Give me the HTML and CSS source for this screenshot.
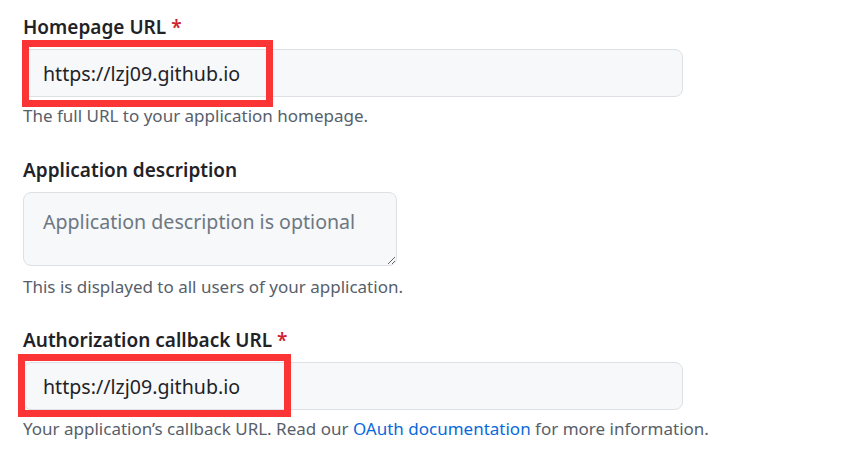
FILE: index.html
```html
<!DOCTYPE html>
<html lang="en">
<head>
<meta charset="utf-8">
<link rel="stylesheet" href="styles.css">
</head>
<body>
<form class="form">
  <div class="group group-first">
    <label class="label">Homepage URL <span class="req">*</span></label>
    <div class="field">
      <input class="input" type="text" value="https://lzj09.github.io">
      <span class="mark mark-1"></span>
    </div>
    <p class="note">The full URL to your application homepage.</p>
  </div>
  <div class="group">
    <label class="label">Application description</label>
    <textarea class="textarea" placeholder="Application description is optional"></textarea>
    <p class="note note-ta">This is displayed to all users of your application.</p>
  </div>
  <div class="group">
    <label class="label">Authorization callback URL <span class="req">*</span></label>
    <div class="field">
      <input class="input" type="text" value="https://lzj09.github.io">
      <span class="mark mark-2"></span>
    </div>
    <p class="note">Your application’s callback URL. Read our <a class="link" href="#">OAuth documentation</a> for more information.</p>
  </div>
</form>
</body>
</html>
```
FILE: styles.css
```css
html, body {
  margin: 0;
  padding: 0;
  background: #ffffff;
}
body {
  font-family: "Noto Sans", "Liberation Sans", sans-serif;
  color: #1f2328;
}
.form {
  padding: 15px 0 0 23px;
}
.group {
  margin-bottom: 30px;
}
.group-first {
  margin-bottom: 31px;
}
.label {
  display: block;
  font-size: 19px;
  font-weight: 600;
  line-height: 24px;
  margin-bottom: 10px;
}
.req {
  color: #cf222e;
}
.field {
  position: relative;
  width: 660px;
}
.input {
  box-sizing: border-box;
  display: block;
  width: 660px;
  height: 48px;
  border: 1px solid #dde1e6;
  border-radius: 8px;
  background: #f6f8fa;
  padding: 0 19px;
  font-family: inherit;
  font-size: 19.6px;
  color: #1f2328;
  outline: none;
}
.textarea {
  box-sizing: border-box;
  display: block;
  width: 374px;
  height: 74px;
  border: 1px solid #dde1e6;
  border-radius: 8px;
  background: #f6f8fa;
  padding: 15px 19px;
  font-family: inherit;
  font-size: 19.6px;
  color: #1f2328;
  outline: none;
  resize: both;
}
.textarea::placeholder {
  color: #6e7781;
}
.note {
  margin: 8px 0 0;
  font-size: 17px;
  line-height: 22px;
  color: #57606a;
}
.note-ta {
  margin-top: 10px;
}
.link {
  color: #0969da;
  text-decoration: none;
}
.mark {
  position: absolute;
  box-sizing: border-box;
  border: 7px solid #fb3535;
  pointer-events: none;
}
.mark-1 {
  left: -1px;
  top: -9px;
  width: 251px;
  height: 67px;
}
.mark-2 {
  left: -5px;
  top: -8px;
  width: 273px;
  height: 63px;
}
```
